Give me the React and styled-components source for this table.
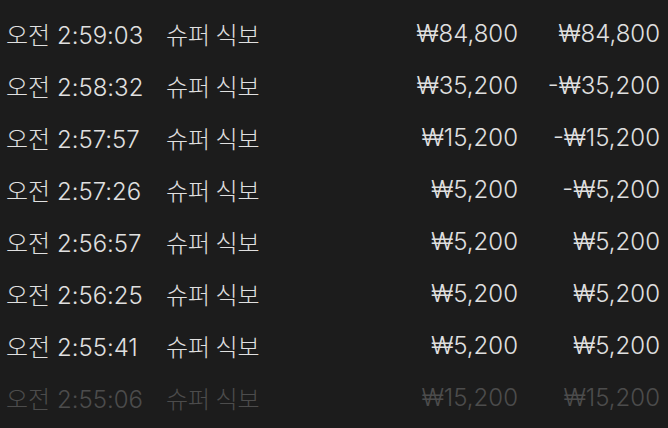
import React from "react";
import styled, { createGlobalStyle } from "styled-components";

const rows = [
  { time: "오전 2:59:03", game: "슈퍼 식보", bet: "₩84,800", result: "₩84,800" },
  { time: "오전 2:58:32", game: "슈퍼 식보", bet: "₩35,200", result: "-₩35,200" },
  { time: "오전 2:57:57", game: "슈퍼 식보", bet: "₩15,200", result: "-₩15,200" },
  { time: "오전 2:57:26", game: "슈퍼 식보", bet: "₩5,200", result: "-₩5,200" },
  { time: "오전 2:56:57", game: "슈퍼 식보", bet: "₩5,200", result: "₩5,200" },
  { time: "오전 2:56:25", game: "슈퍼 식보", bet: "₩5,200", result: "₩5,200" },
  { time: "오전 2:55:41", game: "슈퍼 식보", bet: "₩5,200", result: "₩5,200" },
  { time: "오전 2:55:06", game: "슈퍼 식보", bet: "₩15,200", result: "₩15,200" },
];

const GlobalStyle = createGlobalStyle`
  html, body {
    margin: 0;
    background: #1c1c1c;
  }
`;

function App() {
  return (
    <>
      <GlobalStyle />
      <List>
        {rows.map((r, i) => (
          <Row key={i} $faded={i === rows.length - 1}>
            <Time>{r.time}</Time>
            <Game>{r.game}</Game>
            <Amount>{r.bet}</Amount>
            <Amount>{r.result}</Amount>
          </Row>
        ))}
      </List>
    </>
  );
}

const List = styled.div`
  width: 668px;
  height: 428px;
  overflow: hidden;
  background: #1c1c1c;
  padding: 7px 8px 0 6px;
  box-sizing: border-box;
  font-family: Inter, "Noto Sans CJK KR", sans-serif;
  font-weight: 300;
  font-size: 24px;
  color: #e0e0e0;
`;

const Row = styled.div`
  display: grid;
  grid-template-columns: 160px 160px 192px 142px;
  align-items: center;
  height: 52px;
  color: ${(p) => (p.$faded ? "#4c4c4c" : "#e0e0e0")};
`;

const Time = styled.span`
  white-space: nowrap;
`;

const Game = styled.span`
  white-space: nowrap;
  font-family: "Noto Sans CJK KR", sans-serif;
`;

const Amount = styled.span`
  text-align: right;
  white-space: nowrap;
`;

export default App;
